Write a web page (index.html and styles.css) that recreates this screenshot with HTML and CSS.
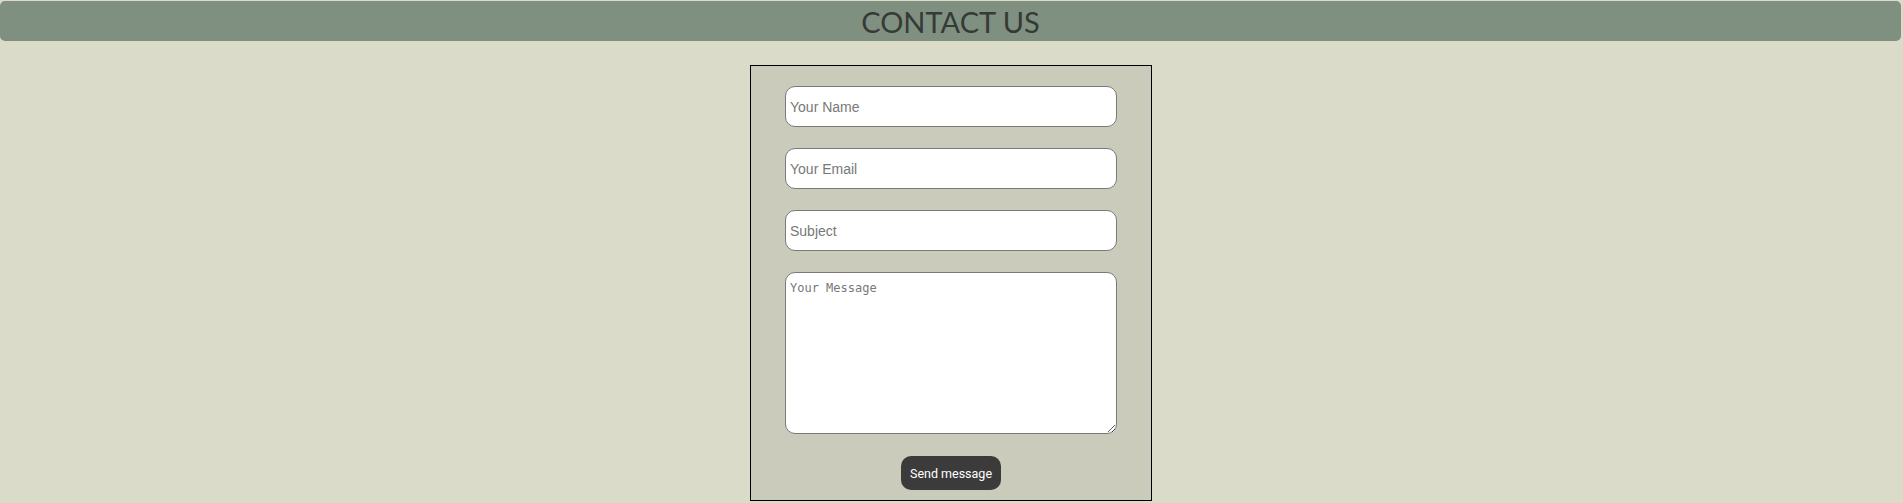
FILE: index.html
```html
<!DOCTYPE html>
<html lang="en">
<head>
<meta charset="utf-8">
<title>Contact Us</title>
<link rel="stylesheet" href="styles.css">
</head>
<body>
<header class="page-header">
  <h1 class="page-title">CONTACT US</h1>
</header>
<main class="main">
  <form class="contact-form">
    <input class="field" type="text" placeholder="Your Name">
    <input class="field" type="email" placeholder="Your Email">
    <input class="field" type="text" placeholder="Subject">
    <textarea class="field message" placeholder="Your Message"></textarea>
    <button class="send-btn" type="button">Send message</button>
  </form>
</main>
</body>
</html>
```

FILE: styles.css
```css
html, body {
  margin: 0;
  padding: 0;
}
body {
  background: #dadcc9;
  font-family: "Liberation Sans", Arial, sans-serif;
}
.page-header {
  margin: 1px 2px 0 0;
  height: 40px;
  background: #7f9080;
  border-radius: 5px;
  display: flex;
  align-items: center;
  justify-content: center;
}
.page-title {
  margin: 0;
  font-family: Lato, sans-serif;
  font-weight: 400;
  font-size: 29px;
  color: #363a36;
  line-height: 1;
  padding-top: 1px;
}
.main {
  display: flex;
  justify-content: center;
  padding: 24px 1px 0 0;
}
.contact-form {
  width: 332px;
  padding: 20px 34px 10px;
  background: #cbcbbb;
  border: 1px solid #000;
  display: flex;
  flex-direction: column;
  gap: 21px;
}
.field {
  box-sizing: border-box;
  width: 100%;
  height: 41px;
  margin: 0;
  border: 1px solid #7a7a7a;
  border-radius: 10px;
  background: #fff;
  padding: 0 4px;
  font-family: "Liberation Sans", Arial, sans-serif;
  font-size: 14px;
  color: #333;
  outline: none;
}
.field::placeholder {
  color: #787878;
}
.message {
  height: 162px;
  padding: 8px 4px 5px;
  font-family: "DejaVu Sans Mono", monospace;
  font-size: 12px;
}
.send-btn {
  align-self: center;
  margin-top: 1px;
  width: 100px;
  height: 34px;
  border: none;
  border-radius: 10px;
  background: #3b3b3b;
  color: #fff;
  font-family: Roboto, "Liberation Sans", Arial, sans-serif;
  font-size: 12.5px;
  cursor: pointer;
}
```
